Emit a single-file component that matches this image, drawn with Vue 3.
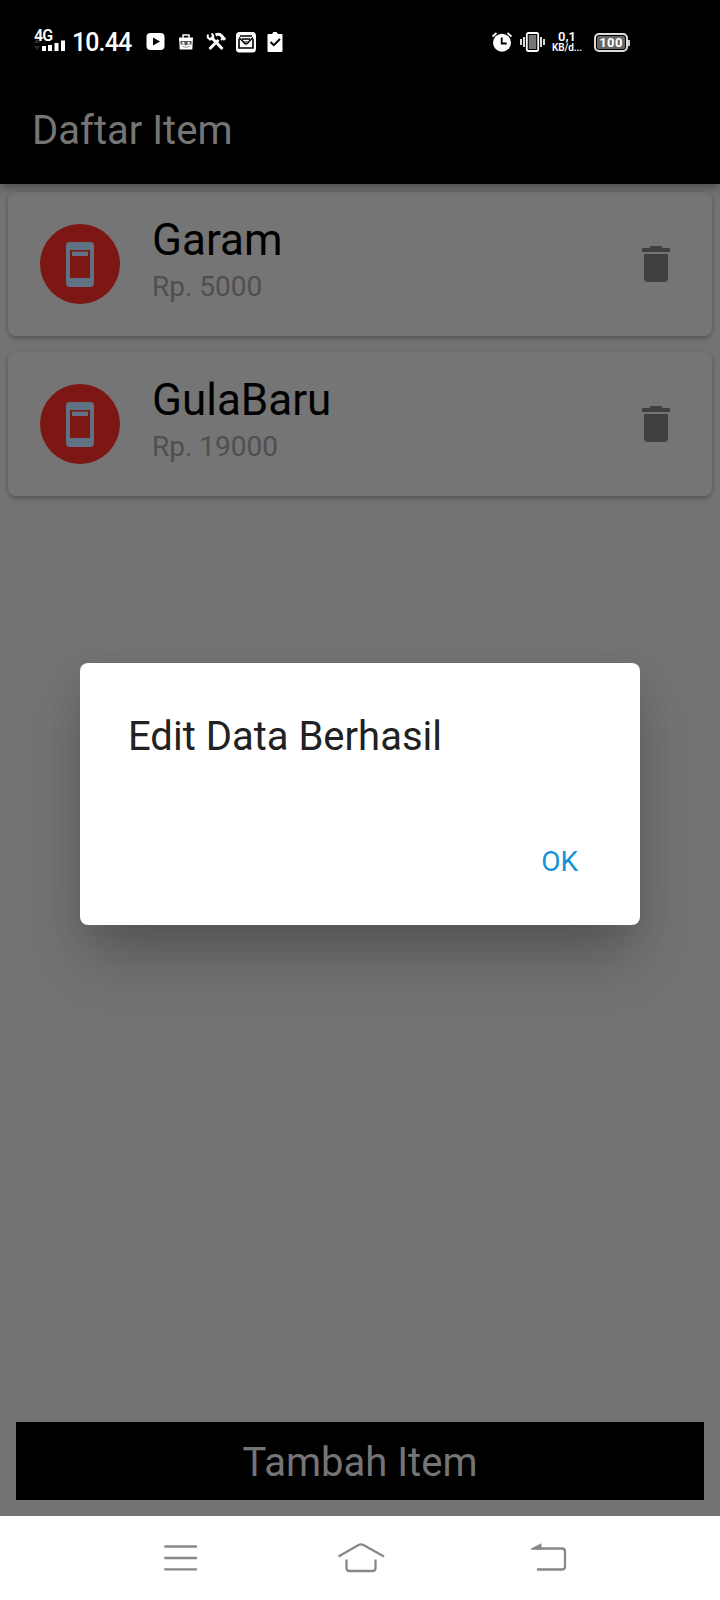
<script setup>
const items = [
  { name: 'Garam', price: 'Rp. 5000' },
  { name: 'GulaBaru', price: 'Rp. 19000' },
]
</script>

<template>
  <div class="phone">
    <div class="status">
      <div class="signal">
        <span class="net">4G</span>
        <svg width="32" height="14" viewBox="0 0 32 14">
          <path d="M0 5l3-4 3 4zM0 8l3 4 3-4z" fill="#2c2c2c" />
          <path d="M8 8h4v5H8zM14 7h4v6h-4zM20.500 5h4v8h-4zM27 2.500h4V13h-4z" fill="#fff" />
        </svg>
      </div>
      <span class="clock">10.44</span>
      <svg class="play" width="20" height="20" viewBox="0 0 20 20">
        <rect x="0.500" y="1" width="18" height="17" rx="4" fill="#fff" />
        <path d="M7 5.500v8l7-4z" fill="#000" />
      </svg>
      <svg class="bag" width="16" height="18" viewBox="0 0 16 18">
        <path d="M5 5V2h6v3" fill="none" stroke="#fff" stroke-width="1.500" />
        <path d="M1 4.500h14l-.7 12H1.700z" fill="#fff" />
        <path d="M2.500 8h11v3.500H9.500L8 12.500l-1.500-1H2.500z" fill="#555" />
        <circle cx="5.300" cy="10" r="1.300" fill="#eee" />
        <circle cx="10.700" cy="10" r="1.300" fill="#eee" />
        <path d="M4.500 13.500q3.500 1.500 7 0" fill="none" stroke="#999" />
      </svg>
      <svg class="tools" width="20" height="20" viewBox="0 0 20 20" fill="none" stroke="#fff">
        <path d="M5 5l11.500 12M3.500 17l9-9" stroke-width="3" />
        <path d="M1.800 2.500v3l2.400 2 3-1.200V3.500L5.500 1.500" stroke-width="2" />
        <path d="M9.500 2.800q4-1.500 6 1l3.500 4" stroke-width="3" />
        <path d="M15 8l2-2" stroke-width="2" />
      </svg>
      <svg class="mail" width="20" height="21" viewBox="0 0 20 21">
        <rect width="20" height="20.500" rx="3.500" fill="#fff" />
        <path d="M3 7v9h14V7M4 4h12" fill="none" stroke="#000" stroke-width="1.600" />
        <path d="M3 5.500l4 4M17 5.500l-4 4M6 7h8M7 9.500q3 5 6 0" fill="none" stroke="#000" stroke-width="1.500" />
        <path d="M8 10h4" stroke="#555" stroke-width="1.500" />
      </svg>
      <svg class="task" width="16" height="20" viewBox="0 0 16 20">
        <path d="M1 2h4l1.500-2h3L11 2h4q.5 0 .5 1v16q0 1-1 1h-13q-1 0-1-1V3q0-1 .5-1z" fill="#fff" />
        <path d="M3.500 10l3.300 3.200L13 7" fill="none" stroke="#000" stroke-width="2" />
      </svg>
      <svg class="alarm" width="20" height="20" viewBox="0 0 20 20">
        <circle cx="10" cy="10.700" r="9" fill="#fff" />
        <path d="M.5 4.500l4-3.500M15.500 1l4 3.500" stroke="#fff" stroke-width="1.800" />
        <path d="M9.700 5.500v6h5" fill="none" stroke="#000" stroke-width="1.800" />
      </svg>
      <svg class="vibrate" width="25" height="20" viewBox="0 0 25 20">
        <rect x="6.800" y="1" width="11.400" height="18" rx="1.500" fill="#000" stroke="#fff" stroke-width="1.800" />
        <rect x="8.800" y="3" width="7.400" height="14" fill="#777" />
        <path d="M1 7v6M4 5v10M21 5v10M24 7v6" stroke="#fff" stroke-width="1.700" />
      </svg>
      <div class="speed"><span>0,1</span><span>KB/d...</span></div>
      <div class="battery"><span>100</span></div>
    </div>

    <header class="appbar"><h1>Daftar Item</h1></header>

    <main class="body">
      <article v-for="item in items" :key="item.name" class="card">
        <div class="avatar">
          <svg width="28" height="45" viewBox="0 0 28 45">
            <path fill-rule="evenodd" d="M4 0h20q4 0 4 4v37q0 4-4 4H4q-4 0-4-4V4q0-4 4-4zM4 8v28h20V8z" fill="#5f7384" />
            <path d="M6 9.500h16V14H6z" fill="#5f7384" />
          </svg>
        </div>
        <div class="info">
          <h2>{{ item.name }}</h2>
          <p>{{ item.price }}</p>
        </div>
        <svg class="trash" width="28" height="36" viewBox="0 0 28 36" fill="#404040">
          <path d="M0 2h7l2-2h10l2 2h7v4H0zM2 8h24v24q0 4-4 4H6q-4 0-4-4z" />
        </svg>
      </article>
      <button class="add">Tambah Item</button>
    </main>

    <nav class="nav">
      <svg width="36" height="30" viewBox="0 0 36 30">
        <path d="M1.300 3.500H34M1.300 15H34M1.300 26.300H34" stroke="#888" stroke-width="2.300" />
      </svg>
      <svg class="home" width="48" height="30" viewBox="0 0 48 30" fill="none" stroke="#888" stroke-width="2.300">
        <path d="M1.500 13.500L21.500 2q2.500-1.300 5 0l20.500 11.500M9.500 16.500V25q0 3 3 3h23q3 0 3-3v-8.500" />
      </svg>
      <svg width="36" height="30" viewBox="0 0 36 30">
        <path d="M6 26.500h25q3 0 3-3v-15q0-3-3-3H4" fill="none" stroke="#888" stroke-width="2.300" />
        <path d="M0 6.700V5.500L10.500.3v6.400z" fill="#888" />
      </svg>
    </nav>

    <section class="dialog" role="dialog">
      <h3>Edit Data Berhasil</h3>
      <button>OK</button>
    </section>
  </div>
</template>

<style>
body { background: #000; }
</style>

<style scoped>
* { box-sizing: border-box; }
h1, h2, h3, p { margin: 0; font-weight: 400; }
button { border: 0; padding: 0; font-family: inherit; }
svg { display: block; flex: none; }
.phone { position: relative; width: 720px; height: 1600px; display: flex; flex-direction: column; overflow: hidden; font-family: Roboto, sans-serif; background: #737373; }
.status { height: 84px; flex: none; display: flex; align-items: center; padding-left: 34px; background: #000; color: #fff; }
.signal { width: 32px; height: 24px; display: flex; flex-direction: column; margin-top: -2px; }
.net { font-size: 16px; line-height: 14px; font-weight: 600; letter-spacing: -1px; }
.signal svg { margin-top: -5px; }
.clock { width: 60px; margin: 2px 0 0 6px; font-size: 25px; line-height: 30px; font-weight: 500; letter-spacing: -.9px; }
.play { margin-left: 14px; }
.bag { margin-left: 12px; }
.tools { margin-left: 12px; }
.mail { margin-left: 10px; }
.task { margin-left: 11px; }
.alarm { margin-left: 209px; }
.vibrate { margin-left: 8px; }
.speed { width: 32px; margin: 0 0 0 6px; display: flex; flex-direction: column; align-items: center; font-weight: 600; font-size: 13px; line-height: 11px; }
.speed span:last-child { font-size: 10px; line-height: 11px; letter-spacing: -.1px; }
.battery { position: relative; width: 34px; height: 19px; margin-left: 11px; border: 2px solid #ddd; border-radius: 5px; background: #666; box-shadow: inset 0 0 0 1px #000; display: flex; align-items: center; justify-content: center; font-size: 13px; font-weight: 700; line-height: 15px; letter-spacing: .3px; }
.battery::after { content: ""; position: absolute; left: 32px; top: 5px; width: 2px; height: 6px; background: #ccc; }
.appbar { height: 100px; flex: none; background: #000; padding: 23px 32px 0; box-shadow: 0 3px 10px rgba(0, 0, 0, .38); z-index: 1; }
.appbar h1 { color: #757575; font-size: 40px; line-height: 48px; }
.body { flex: 1; display: flex; flex-direction: column; gap: 16px; padding: 8px 8px 16px; }
.card { height: 144px; display: flex; padding: 0 42px 0 32px; border-radius: 8px; background: #757575; box-shadow: 0 2px 4px rgba(0, 0, 0, .3); }
.avatar { width: 80px; height: 80px; margin-top: 32px; border-radius: 50%; background: #7c1713; display: flex; align-items: center; justify-content: center; }
.info { flex: 1; margin: 22px 0 0 32px; }
.info h2 { color: #000; font-size: 44px; line-height: 52px; }
.info p { color: #4f4f4f; font-size: 28px; line-height: 32px; margin-top: 5px; }
.trash { margin-top: 54px; }
.add { height: 78px; margin: auto 8px 0; background: #000; color: #757575; font-size: 40px; line-height: 48px; padding-top: 4px; }
.nav { height: 84px; flex: none; background: #fff; display: flex; align-items: center; justify-content: space-between; padding: 0 153px 0 163px; }
.home { margin-right: 9px; }
.dialog { position: absolute; left: 80px; top: 663px; width: 560px; height: 262px; display: flex; flex-direction: column; justify-content: space-between; padding: 50px 62px 46px 48px; border-radius: 8px; background: #fff; box-shadow: 0 40px 56px -8px rgba(0, 0, 0, .23), 0 8px 36px rgba(0, 0, 0, .08); }
.dialog h3 { color: #212121; font-size: 40px; line-height: 48px; }
.dialog button { align-self: flex-end; background: none; color: #1193d8; font-size: 28px; line-height: 34px; }
</style>
